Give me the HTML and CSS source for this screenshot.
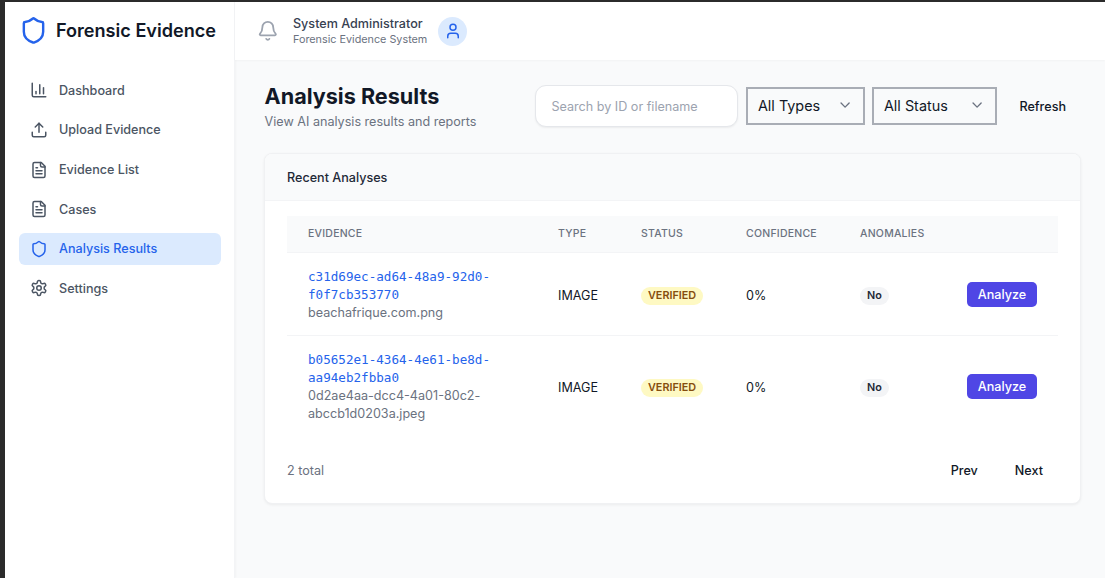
FILE: index.html
```html
<!DOCTYPE html>
<html lang="en">
<head>
<meta charset="utf-8">
<title>Analysis Results</title>
<link rel="stylesheet" href="styles.css">
</head>
<body>
<div class="app">
  <aside class="sidebar">
    <div class="brand">
      <svg class="brand-icon" viewBox="0 0 24 24" fill="none" stroke="currentColor" stroke-width="2" stroke-linecap="round" stroke-linejoin="round"><path d="M20 13c0 5-3.5 7.5-7.66 8.95a1 1 0 0 1-.67-.01C7.5 20.5 4 18 4 13V6a1 1 0 0 1 1-1c2 0 4.5-1.2 6.24-2.72a1.17 1.17 0 0 1 1.52 0C14.51 3.81 17 5 19 5a1 1 0 0 1 1 1z"/></svg>
      <span class="brand-name">Forensic Evidence</span>
    </div>
    <nav class="nav">
      <a class="nav-item"><svg class="nav-icon" viewBox="0 0 24 24" fill="none" stroke="currentColor" stroke-width="2" stroke-linecap="round" stroke-linejoin="round"><path d="M3 3v16a2 2 0 0 0 2 2h16"/><path d="M18 17V9"/><path d="M13 17V5"/><path d="M8 17v-3"/></svg>Dashboard</a>
      <a class="nav-item"><svg class="nav-icon" viewBox="0 0 24 24" fill="none" stroke="currentColor" stroke-width="2" stroke-linecap="round" stroke-linejoin="round"><path d="M21 15v4a2 2 0 0 1-2 2H5a2 2 0 0 1-2-2v-4"/><path d="M17 8l-5-5-5 5"/><path d="M12 3v12"/></svg>Upload Evidence</a>
      <a class="nav-item"><svg class="nav-icon" viewBox="0 0 24 24" fill="none" stroke="currentColor" stroke-width="2" stroke-linecap="round" stroke-linejoin="round"><path d="M15 2H6a2 2 0 0 0-2 2v16a2 2 0 0 0 2 2h12a2 2 0 0 0 2-2V7z"/><path d="M14 2v4a2 2 0 0 0 2 2h4"/><path d="M10 9H8"/><path d="M16 13H8"/><path d="M16 17H8"/></svg>Evidence List</a>
      <a class="nav-item"><svg class="nav-icon" viewBox="0 0 24 24" fill="none" stroke="currentColor" stroke-width="2" stroke-linecap="round" stroke-linejoin="round"><path d="M15 2H6a2 2 0 0 0-2 2v16a2 2 0 0 0 2 2h12a2 2 0 0 0 2-2V7z"/><path d="M14 2v4a2 2 0 0 0 2 2h4"/><path d="M10 9H8"/><path d="M16 13H8"/><path d="M16 17H8"/></svg>Cases</a>
      <a class="nav-item active"><svg class="nav-icon" viewBox="0 0 24 24" fill="none" stroke="currentColor" stroke-width="2" stroke-linecap="round" stroke-linejoin="round"><path d="M20 13c0 5-3.5 7.5-7.66 8.95a1 1 0 0 1-.67-.01C7.5 20.5 4 18 4 13V6a1 1 0 0 1 1-1c2 0 4.5-1.2 6.24-2.72a1.17 1.17 0 0 1 1.52 0C14.51 3.81 17 5 19 5a1 1 0 0 1 1 1z"/></svg>Analysis Results</a>
      <a class="nav-item"><svg class="nav-icon" viewBox="0 0 24 24" fill="none" stroke="currentColor" stroke-width="2" stroke-linecap="round" stroke-linejoin="round"><path d="M12.22 2h-.44a2 2 0 0 0-2 2v.18a2 2 0 0 1-1 1.73l-.43.25a2 2 0 0 1-2 0l-.15-.08a2 2 0 0 0-2.73.73l-.22.38a2 2 0 0 0 .73 2.73l.15.1a2 2 0 0 1 1 1.72v.51a2 2 0 0 1-1 1.74l-.15.09a2 2 0 0 0-.73 2.73l.22.38a2 2 0 0 0 2.73.73l.15-.08a2 2 0 0 1 2 0l.43.25a2 2 0 0 1 1 1.73V20a2 2 0 0 0 2 2h.44a2 2 0 0 0 2-2v-.18a2 2 0 0 1 1-1.73l.43-.25a2 2 0 0 1 2 0l.15.08a2 2 0 0 0 2.73-.73l.22-.39a2 2 0 0 0-.73-2.73l-.15-.08a2 2 0 0 1-1-1.74v-.5a2 2 0 0 1 1-1.74l.15-.09a2 2 0 0 0 .73-2.73l-.22-.38a2 2 0 0 0-2.73-.73l-.15.08a2 2 0 0 1-2 0l-.43-.25a2 2 0 0 1-1-1.73V4a2 2 0 0 0-2-2z"/><circle cx="12" cy="12" r="3"/></svg>Settings</a>
    </nav>
  </aside>
  <div class="content">
    <header class="topbar">
      <svg class="bell" viewBox="0 0 24 24" fill="none" stroke="currentColor" stroke-width="2" stroke-linecap="round" stroke-linejoin="round"><path d="M10.27 21a2 2 0 0 0 3.46 0"/><path d="M3.26 15.33A1 1 0 0 0 4 17h16a1 1 0 0 0 .74-1.67C19.41 13.96 18 12.5 18 8A6 6 0 0 0 6 8c0 4.5-1.41 5.96-2.74 7.33"/></svg>
      <div class="user">
        <div class="user-name">System Administrator</div>
        <div class="user-role">Forensic Evidence System</div>
      </div>
      <div class="avatar"><svg viewBox="0 0 24 24" fill="none" stroke="currentColor" stroke-width="2" stroke-linecap="round" stroke-linejoin="round"><path d="M19 21v-2a4 4 0 0 0-4-4H9a4 4 0 0 0-4 4v2"/><circle cx="12" cy="7" r="4"/></svg></div>
    </header>
    <main class="main">
      <div class="page-head">
        <div class="titles">
          <h1 class="title">Analysis Results</h1>
          <p class="subtitle">View AI analysis results and reports</p>
        </div>
        <div class="filters">
          <div class="search">Search by ID or filename</div>
          <div class="select select-types">All Types<svg viewBox="0 0 24 24" fill="none" stroke="currentColor" stroke-width="2" stroke-linecap="round" stroke-linejoin="round"><path d="M6 9l6 6 6-6"/></svg></div>
          <div class="select select-status">All Status<svg viewBox="0 0 24 24" fill="none" stroke="currentColor" stroke-width="2" stroke-linecap="round" stroke-linejoin="round"><path d="M6 9l6 6 6-6"/></svg></div>
          <button class="ghost refresh">Refresh</button>
        </div>
      </div>
      <section class="card">
        <div class="card-head">Recent Analyses</div>
        <div class="card-body">
          <table class="table">
            <colgroup>
              <col class="c1"><col class="c2"><col class="c3"><col class="c4"><col class="c5"><col>
            </colgroup>
            <thead>
              <tr><th>Evidence</th><th>Type</th><th>Status</th><th>Confidence</th><th>Anomalies</th><th></th></tr>
            </thead>
            <tbody>
              <tr>
                <td class="evidence"><div class="id">c31d69ec-ad64-48a9-92d0-f0f7cb353770</div><div class="file">beachafrique.com.png</div></td>
                <td>IMAGE</td>
                <td><span class="badge verified">VERIFIED</span></td>
                <td>0%</td>
                <td><span class="badge neutral">No</span></td>
                <td><button class="analyze">Analyze</button></td>
              </tr>
              <tr>
                <td class="evidence"><div class="id">b05652e1-4364-4e61-be8d-aa94eb2fbba0</div><div class="file">0d2ae4aa-dcc4-4a01-80c2-abccb1d0203a.jpeg</div></td>
                <td>IMAGE</td>
                <td><span class="badge verified">VERIFIED</span></td>
                <td>0%</td>
                <td><span class="badge neutral">No</span></td>
                <td><button class="analyze">Analyze</button></td>
              </tr>
            </tbody>
          </table>
          <div class="pager">
            <span class="total">2 total</span>
            <div class="pager-buttons">
              <button class="ghost">Prev</button>
              <button class="ghost">Next</button>
            </div>
          </div>
        </div>
      </section>
    </main>
  </div>
</div>
</body>
</html>
```
FILE: styles.css
```css
* { box-sizing: border-box; }
html, body { height: 100%; }
body {
  margin: 0;
  padding: 2px 0 0 5px;
  background: #2b2b2b;
  font-family: Inter, "Liberation Sans", sans-serif;
  color: #111827;
  overflow: hidden;
}
.app { display: flex; height: 100%; background: #f9fafb; }
.sidebar {
  width: 230px;
  flex: none;
  background: #fff;
  border-right: 1px solid #f3f4f6;
  box-shadow: 1px 0 2px rgba(0,0,0,.03);
}
.brand { display: flex; align-items: center; gap: 8px; height: 58px; padding-left: 14px; padding-bottom: 2px; }
.brand-icon { width: 29px; height: 29px; color: #2563eb; flex: none; }
.brand-name { font-size: 18.1px; font-weight: 600; color: #111827; }
.nav { display: flex; flex-direction: column; padding: 14.4px 13px 0 14px; gap: 7.6px; }
.nav-item {
  display: flex;
  align-items: center;
  gap: 11px;
  height: 32px;
  padding: 0 10px 0 11px;
  border-radius: 6px;
  font-size: 12.6px;
  font-weight: 500;
  color: #4b5563;
}
.nav-item.active { background: #dbeafe; color: #2563eb; }
.nav-icon { width: 18px; height: 18px; flex: none; }
.content { flex: 1; min-width: 0; display: flex; flex-direction: column; }
.topbar {
  height: 58px;
  background: #fff;
  display: flex;
  align-items: center;
  padding-left: 22px;
  box-shadow: 0 1px 2px rgba(0,0,0,.03);
}
.bell { width: 21.6px; height: 21.6px; color: #9ca3af; margin-right: 14.4px; }
.user { margin-right: 11px; }
.user-name { font-size: 12.6px; font-weight: 500; color: #374151; line-height: 17px; }
.user-role { font-size: 10.8px; color: #6b7280; line-height: 15px; }
.avatar {
  width: 29px;
  height: 29px;
  border-radius: 50%;
  background: #dbeafe;
  color: #2563eb;
  display: flex;
  align-items: center;
  justify-content: center;
}
.avatar svg { width: 18px; height: 18px; }
.main { padding: 22px 24px 0 29px; }
.page-head { display: flex; justify-content: space-between; align-items: flex-start; height: 71px; }
.titles { padding-left: .6px; }
.title { margin: 0; font-size: 21.6px; font-weight: 700; line-height: 28px; color: #111827; }
.subtitle { margin: 3px 0 0; font-size: 12.6px; line-height: 18px; color: #6b7280; }
.filters { display: flex; align-items: center; gap: 7px; height: 42px; margin-top: 3px; }
.search {
  width: 203px;
  height: 42px;
  margin-right: 1px;
  padding-left: 15px;
  display: flex;
  align-items: center;
  background: #fff;
  border: 1px solid #e5e7eb;
  border-radius: 11px;
  box-shadow: 0 1px 2px rgba(0,0,0,.06);
  font-size: 12.6px;
  color: #9ca3af;
}
.select {
  height: 38px;
  display: flex;
  align-items: center;
  justify-content: space-between;
  padding: 0 10px 1px 9.5px;
  border: 2px solid #a9adb5;
  font-size: 14.4px;
  color: #111827;
  background: #f9fafb;
}
.select svg { width: 16.2px; height: 16.2px; color: #6b7280; }
.select-types { width: 119px; }
.select-status { width: 125px; }
.ghost {
  border: 0;
  background: transparent;
  font: 500 12.6px Inter, "Liberation Sans", sans-serif;
  color: #111827;
  padding: 0;
}
.refresh { margin-left: 15px; margin-right: 15px; }
.card {
  width: 817px;
  background: #fff;
  border: 1px solid #f0f1f3;
  border-radius: 8px;
  box-shadow: 0 1px 3px rgba(0,0,0,.06);
  overflow: hidden;
}
.card-head {
  height: 47px;
  padding-left: 22px;
  display: flex;
  align-items: center;
  background: #f9fafb;
  border-bottom: 1px solid #f3f4f6;
  font-size: 12.6px;
  font-weight: 500;
  color: #1f2937;
}
.card-body { padding: 15px 22px 0 22px; }
.table { width: 771px; border-collapse: collapse; table-layout: fixed; font-size: 12.6px; }
.c1 { width: 250px; }
.c2 { width: 83px; }
.c3 { width: 105px; }
.c4 { width: 114px; }
.c5 { width: 107px; }
th {
  height: 36px;
  background: #f9fafb;
  border-bottom: 1px solid #f3f4f6;
  padding: 0 0 0 21px;
  text-align: left;
  font-size: 10.5px;
  font-weight: 500;
  letter-spacing: .23px;
  color: #6b7280;
  text-transform: uppercase;
}
td { padding: 16px 21px 12px; color: #111827; vertical-align: middle; }
td.evidence { padding: 15px 21px 13px; }
tbody tr + tr td { border-top: 1px solid #f3f4f6; }
.id { font-family: "DejaVu Sans Mono", "Liberation Mono", monospace; font-size: 12.6px; line-height: 18px; color: #2563eb; }
.file { font-size: 12.6px; line-height: 18px; color: #6b7280; }
.badge {
  display: inline-block;
  height: 18px;
  line-height: 18px;
  padding: 0 7px;
  border-radius: 9px;
  font-size: 10.8px;
  font-weight: 600;
}
.verified { background: #fef9c3; color: #854d0e; }
.neutral { background: #f3f4f6; color: #1f2937; }
.analyze {
  display: block;
  width: 70px;
  height: 25.6px;
  margin-bottom: 2px;
  border: 0;
  border-radius: 5px;
  background: #4f46e5;
  color: #fff;
  font: 500 12.6px Inter, "Liberation Sans", sans-serif;
  padding: 0;
}
.pager { display: flex; justify-content: space-between; align-items: center; height: 67px; padding-top: 3px; }
.total { font-size: 12.6px; color: #6b7280; }
.pager-buttons { display: flex; gap: 37px; padding-right: 15px; }
```
